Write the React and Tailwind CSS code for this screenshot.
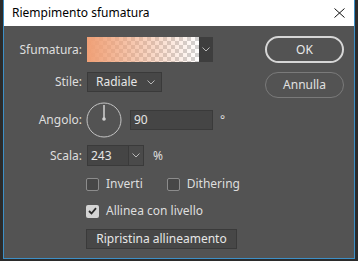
import React from "react";

const Chevron = ({ className = "" }) => (
  <svg width="8" height="5" viewBox="0 0 8 5" className={className}>
    <path d="M0.5 0.5 L4 4 L7.5 0.5" fill="none" stroke="#b8b8b8" strokeWidth="1" />
  </svg>
);

const Checkbox = ({ checked }) =>
  checked ? (
    <div className="w-[13px] h-[13px] rounded-[2px] bg-[#d4d4d4] flex items-center justify-center">
      <svg width="9" height="8" viewBox="0 0 9 8">
        <path d="M1 4 L3.5 6.5 L8 1.2" fill="none" stroke="#2a2a2a" strokeWidth="1.8" />
      </svg>
    </div>
  ) : (
    <div className="w-[13px] h-[13px] rounded-[2px] border border-[#8c8c8c] bg-[#474747]" />
  );

export default function App() {
  const font = { fontFamily: '"Noto Sans", "Open Sans", sans-serif' };
  return (
    <div className="w-[358px] h-[261px] bg-[#2b2b2b] px-[3px] overflow-hidden" style={font}>
      <div className="w-[352px] h-[259px] border-x border-b border-[#3d8fc6] flex flex-col">
        <div className="h-[26px] bg-white flex items-center justify-between pl-[8px] pr-[9px] shrink-0">
          <span className="text-[12px] text-black leading-none">Riempimento sfumatura</span>
          <svg width="11" height="10" viewBox="0 0 11 10">
            <path d="M0.5 0.5 L10.5 9.5 M10.5 0.5 L0.5 9.5" stroke="#111" strokeWidth="1" />
          </svg>
        </div>
        <div className="flex-1 bg-[#535353] flex text-[12px] text-[#dedede]">
          <div className="w-[260px] flex flex-col pt-[11px]">
            {/* Sfumatura */}
            <div className="flex items-center h-[25px]">
              <div className="w-[78px] text-right pr-[0px]">Sfumatura:</div>
              <div className="ml-[5px] flex h-[25px]">
                <div
                  className="w-[112px] h-full"
                  style={{
                    backgroundImage:
                      "linear-gradient(to right, rgba(240,160,118,1) 0%, rgba(240,160,118,0) 100%), repeating-conic-gradient(#d2d2d2 0% 25%, #ffffff 0% 50%)",
                    backgroundSize: "100% 100%, 8px 8px",
                  }}
                />
                <div className="w-[14px] h-full bg-[#3e3e3e] flex items-center justify-center">
                  <Chevron />
                </div>
              </div>
            </div>
            {/* Stile */}
            <div className="flex items-center h-[20px] mt-[10px]">
              <div className="w-[78px] text-right">Stile:</div>
              <div className="ml-[5px] w-[75px] h-[20px] bg-[#474747] border border-[#3a3a3a] flex items-center justify-between pl-[8px] pr-[6px]">
                <span className="text-[#e6e6e6]">Radiale</span>
                <Chevron />
              </div>
            </div>
            {/* Angolo */}
            <div className="flex items-center h-[35px] mt-[10px]">
              <div className="w-[78px] text-right">Angolo:</div>
              <svg width="36" height="36" viewBox="0 0 36 36" className="ml-[4px]">
                <circle cx="18" cy="18" r="17" fill="none" stroke="#c4c4c4" strokeWidth="1" />
                <line x1="18" y1="3" x2="18" y2="17" stroke="#d0d0d0" strokeWidth="1.5" />
                <circle cx="18" cy="17" r="1.8" fill="#d0d0d0" />
              </svg>
              <div className="ml-[8px] w-[83px] h-[20px] bg-[#454545] border border-[#3a3a3a] flex items-center pl-[3px] text-[#e6e6e6]">
                90
              </div>
              <span className="ml-[7px] text-[12px]">°</span>
            </div>
            {/* Scala */}
            <div className="flex items-center h-[21px] mt-[8px]">
              <div className="w-[78px] text-right">Scala:</div>
              <div className="ml-[5px] flex h-[21px] border border-[#3a3a3a] bg-[#454545]">
                <div className="w-[40px] flex items-center pl-[3px] text-[#e6e6e6]">243</div>
                <div className="w-[15px] border-l border-[#3a3a3a] bg-[#4a4a4a] flex items-center justify-center">
                  <Chevron />
                </div>
              </div>
              <span className="ml-[9px]">%</span>
            </div>
            {/* Checkboxes */}
            <div className="flex items-center h-[16px] mt-[10px] pl-[82px]">
              <Checkbox />
              <span className="ml-[7px]">Inverti</span>
              <div className="ml-[24px] flex items-center">
                <Checkbox />
                <span className="ml-[7px]">Dithering</span>
              </div>
            </div>
            <div className="flex items-center h-[16px] mt-[11px] pl-[82px]">
              <Checkbox checked />
              <span className="ml-[7px]">Allinea con livello</span>
            </div>
            <div className="flex h-[20px] mt-[10px] pl-[82px]">
              <div className="w-[151px] h-[20px] bg-[#474747] border border-[#3a3a3a] flex items-center justify-center text-[#e6e6e6]">
                Ripristina allineamento
              </div>
            </div>
          </div>
          <div className="flex flex-col pt-[10px] ml-[1px]">
            <div className="w-[79px] h-[27px] rounded-full border-2 border-[#d6d6d6] flex items-center justify-center text-[#eaeaea]">
              OK
            </div>
            <div className="w-[79px] h-[26px] mt-[9px] rounded-full border-[1.5px] border-[#7a7a7a] flex items-center justify-center text-[#e0e0e0]">
              Annulla
            </div>
          </div>
        </div>
      </div>
    </div>
  );
}
